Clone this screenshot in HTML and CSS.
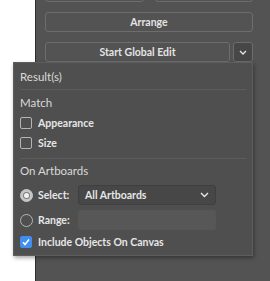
FILE: index.html
```
<!DOCTYPE html>
<html lang="en">

<head>
    <meta charset="UTF-8" />
    <title>Global Edit Options</title>
    <link rel="stylesheet" href="styles.css">
</head>

<body>
    <div class="panel">
        <div class="btn-pair">
            <button class="btn"></button>
            <button class="btn"></button>
        </div>
        <button class="btn">Arrange</button>
        <div class="split">
            <button class="btn">Start Global Edit</button>
            <button class="btn toggle">
                <svg width="8" height="5" viewBox="0 0 8 5"><path d="M1 1l3 3 3-3" fill="none" stroke="#e6e6e6" stroke-width="1.3"/></svg>
            </button>
        </div>
    </div>

    <div class="popup">
        <div class="heading first">Result(s)</div>
        <div class="divider"></div>
        <div class="heading match">Match</div>
        <label class="option"><span class="check"></span>Appearance</label>
        <label class="option"><span class="check"></span>Size</label>
        <div class="divider lower"></div>
        <div class="heading artboards">On Artboards</div>
        <div class="field select-row">
            <span class="radio on"></span>
            <span class="field-label">Select:</span>
            <div class="dropdown">
                <span>All Artboards</span>
                <svg width="9" height="6" viewBox="0 0 9 6"><path d="M1 1l3.5 3.5 3.5-3.5" fill="none" stroke="#e6e6e6" stroke-width="1.4"/></svg>
            </div>
        </div>
        <div class="field range-row">
            <span class="radio"></span>
            <span class="field-label">Range:</span>
            <div class="range-input"></div>
        </div>
        <label class="option include"><span class="check checked">
            <svg width="10" height="10" viewBox="0 0 10 10"><path d="M2 5.2l2 2.2 4-5" fill="none" stroke="#fff" stroke-width="1.6"/></svg>
        </span>Include Objects On Canvas</label>
    </div>
</body>

</html>
```

FILE: styles.css
```
* {
    box-sizing: border-box;
}

body {
    margin: 0;
    background: #ffffff;
    font-family: 'Lato', 'Open Sans', sans-serif;
    font-size: 11px;
    color: #e6e6e6;
    height: 281px;
    overflow: hidden;
    position: relative;
}

.panel {
    margin-left: 35px;
    height: 281px;
    background: #535353;
    border-left: 1px solid #2e2e2e;
    padding: 0 17px 0 9px;
    display: flex;
    flex-direction: column;
    gap: 10px;
}

.btn {
    height: 20px;
    border: 1px solid #6d6d6d;
    border-radius: 3px;
    background: #535353;
    color: #e4e4e4;
    font-family: inherit;
    font-size: 10.5px;
    font-weight: 700;
    padding: 0;
    display: flex;
    align-items: center;
    justify-content: center;
}

.btn-pair {
    display: grid;
    grid-template-columns: 99px 98px;
    gap: 11px;
    margin-top: -18px;
}

.split {
    display: flex;
    gap: 3px;
}

.split .btn {
    flex: 1;
}

.split .toggle {
    flex: 0 0 20px;
    background: #474747;
}

.popup {
    position: absolute;
    left: 13px;
    top: 62px;
    width: 240px;
    height: 194px;
    background: #4f4f4f;
    border: 1px solid #5d5d5d;
    box-shadow: 1px 2px 4px rgba(0, 0, 0, 0.35);
    padding: 0 6px 0 6px;
}

.heading {
    color: #dadada;
    font-size: 11.5px;
}

.heading.first {
    height: 26px;
    line-height: 28px;
}

.heading.match {
    height: 23px;
    line-height: 26px;
}

.heading.artboards {
    height: 24px;
    line-height: 24px;
}

.divider {
    height: 1px;
    background: #5c5c5c;
}

.divider.lower {
    margin-top: 5px;
}

.option {
    display: flex;
    align-items: center;
    gap: 6px;
    height: 20px;
    font-weight: 700;
    font-size: 10.5px;
    color: #e6e6e6;
}

.option.include {
    margin-top: 2px;
}

.check {
    width: 12px;
    height: 12px;
    border: 1px solid #b4b4b4;
    border-radius: 2px;
    display: flex;
    align-items: center;
    justify-content: center;
}

.check.checked {
    background: #3f8ef0;
    border-color: #3f8ef0;
}

.field {
    display: flex;
    align-items: center;
    height: 20px;
    font-weight: 700;
    font-size: 10.5px;
    color: #e6e6e6;
}

.select-row {
    margin-top: 2px;
}

.range-row {
    margin-top: 5px;
}

.radio {
    width: 13px;
    height: 13px;
    border: 1px solid #b4b4b4;
    border-radius: 50%;
    margin-right: 5px;
    display: flex;
    align-items: center;
    justify-content: center;
}

.radio.on {
    background: #c6c6c6;
    border-color: #c6c6c6;
}

.radio.on::after {
    content: '';
    width: 5px;
    height: 5px;
    border-radius: 50%;
    background: #f2f2f2;
    box-shadow: 0 0 0 1px #7e7e7e;
}

.field-label {
    width: 40px;
}

.dropdown {
    width: 138px;
    height: 20px;
    background: #474747;
    border: 1px solid #3f3f3f;
    border-radius: 3px;
    display: flex;
    align-items: center;
    justify-content: space-between;
    padding: 0 6px;
}

.range-input {
    width: 138px;
    height: 20px;
    background: #575757;
    border-radius: 3px;
}
```
